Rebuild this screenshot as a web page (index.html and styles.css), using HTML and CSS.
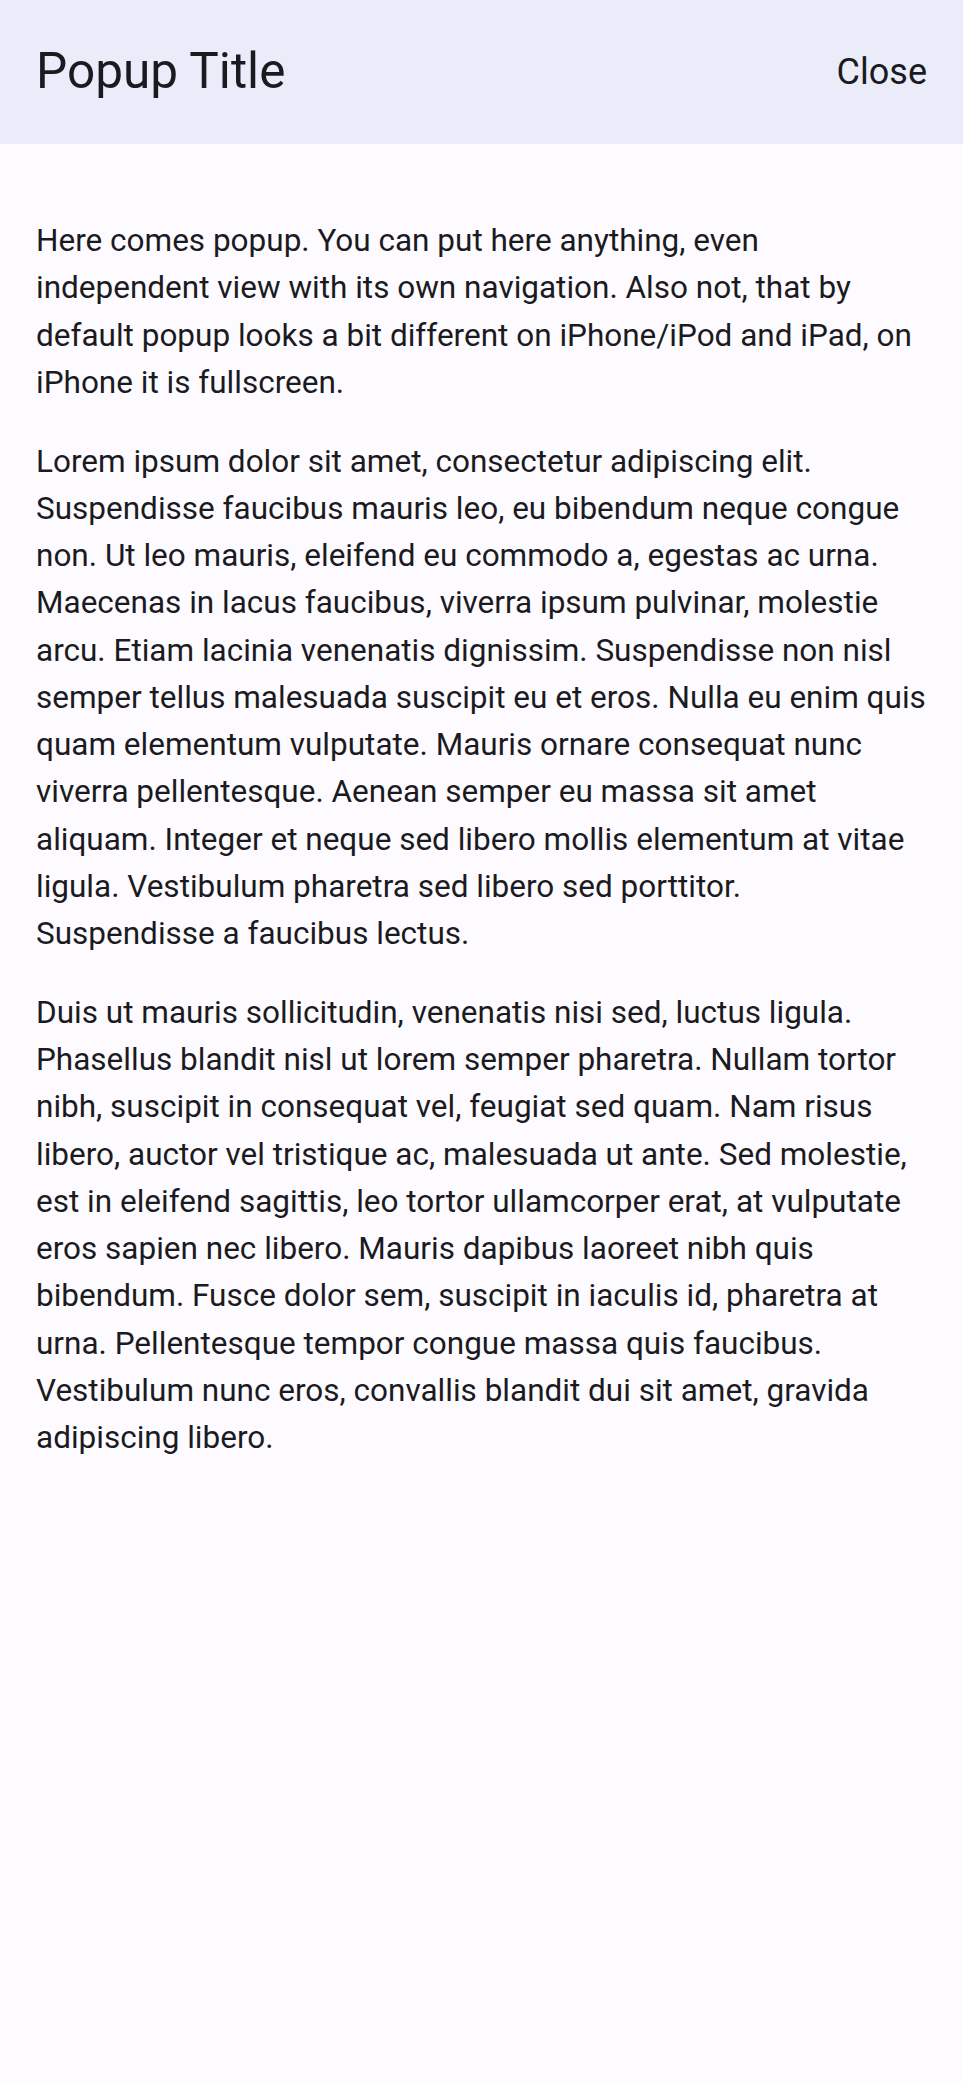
FILE: index.html
```html
<!DOCTYPE html>
<html lang="en">
<head>
<meta charset="utf-8">
<title>Popup</title>
<link rel="stylesheet" href="styles.css">
</head>
<body>
<div class="popup">
  <header class="navbar">
    <h1 class="title">Popup Title</h1>
    <a class="close">Close</a>
  </header>
  <main class="content">
    <p>Here comes popup. You can put here anything, even independent view with its own navigation. Also not, that by default popup looks a bit different on iPhone/iPod and iPad, on iPhone it is fullscreen.</p>
    <p>Lorem ipsum dolor sit amet, consectetur adipiscing elit. Suspendisse faucibus mauris leo, eu bibendum neque congue non. Ut leo mauris, eleifend eu commodo a, egestas ac urna. Maecenas in lacus faucibus, viverra ipsum pulvinar, molestie arcu. Etiam lacinia venenatis dignissim. Suspendisse non nisl semper tellus malesuada suscipit eu et eros. Nulla eu enim quis quam elementum vulputate. Mauris ornare consequat nunc viverra pellentesque. Aenean semper eu massa sit amet aliquam. Integer et neque sed libero mollis elementum at vitae ligula. Vestibulum pharetra sed libero sed porttitor. Suspendisse a faucibus lectus.</p>
    <p>Duis ut mauris sollicitudin, venenatis nisi sed, luctus ligula. Phasellus blandit nisl ut lorem semper pharetra. Nullam tortor nibh, suscipit in consequat vel, feugiat sed quam. Nam risus libero, auctor vel tristique ac, malesuada ut ante. Sed molestie, est in eleifend sagittis, leo tortor ullamcorper erat, at vulputate eros sapien nec libero. Mauris dapibus laoreet nibh quis bibendum. Fusce dolor sem, suscipit in iaculis id, pharetra at urna. Pellentesque tempor congue massa quis faucibus. Vestibulum nunc eros, convallis blandit dui sit amet, gravida adipiscing libero.</p>
  </main>
</div>
</body>
</html>
```

FILE: styles.css
```css
html, body {
  margin: 0;
  padding: 0;
  height: 100%;
}
body {
  background: #fdfbff;
  color: #1b1b1f;
  font-family: Roboto, "Noto Sans", sans-serif;
}
.popup {
  min-height: 100%;
  background: #fdfbff;
}
.navbar {
  height: 144px;
  background: #eaedf9;
  display: flex;
  align-items: center;
  justify-content: space-between;
  padding: 0 36px;
  box-sizing: border-box;
}
.title {
  margin: 0;
  font-size: 49.5px;
  font-weight: 400;
  line-height: 1;
}
.close {
  font-size: 36px;
  line-height: 1;
  color: #1b1b1f;
}
.content {
  padding: 41.5px 36px;
}
.content p {
  margin: 31.5px 0;
  font-size: 31.5px;
  line-height: 1.5;
}
```
